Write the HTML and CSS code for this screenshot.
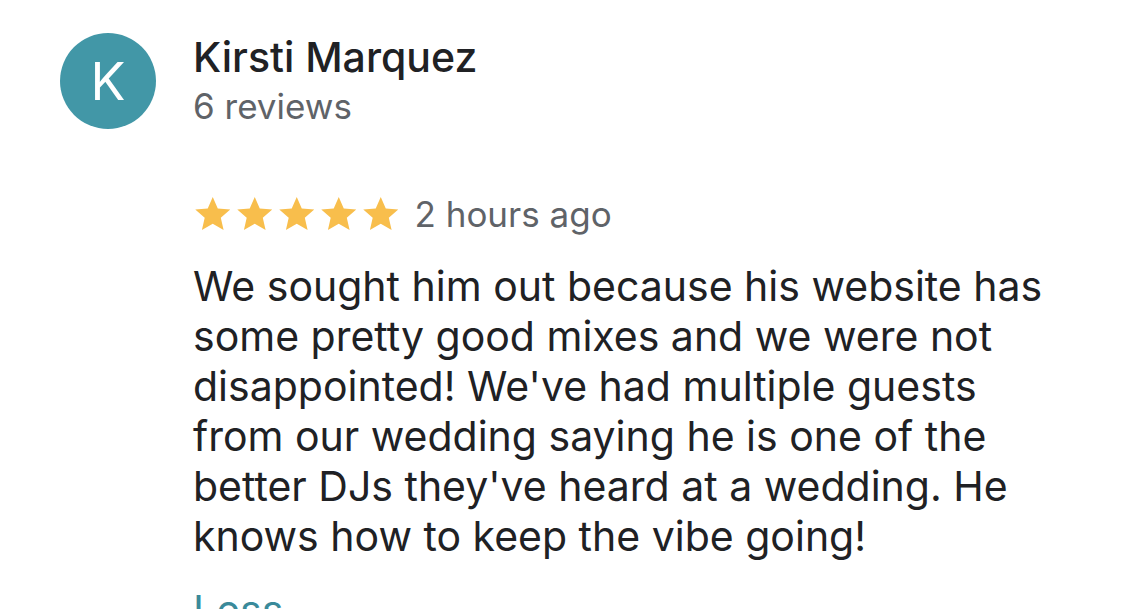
FILE: index.html
```html
<!DOCTYPE html>
<html>
<head>
<meta charset="utf-8">
<link rel="stylesheet" href="styles.css">
</head>
<body>
<div class="review">
  <div class="header">
    <div class="avatar">K</div>
    <div class="who">
      <div class="name">Kirsti Marquez</div>
      <div class="count">6 reviews</div>
    </div>
  </div>
  <div class="content">
    <div class="meta">
      <div class="stars">
        <svg class="star" viewBox="0 0 24 24"><path d="M12 1.8l3.05 6.98 7.58.68-5.74 5.02 1.7 7.42L12 18l-6.59 3.9 1.7-7.42L1.37 9.46l7.58-.68z"/></svg>
        <svg class="star" viewBox="0 0 24 24"><path d="M12 1.8l3.05 6.98 7.58.68-5.74 5.02 1.7 7.42L12 18l-6.59 3.9 1.7-7.42L1.37 9.46l7.58-.68z"/></svg>
        <svg class="star" viewBox="0 0 24 24"><path d="M12 1.8l3.05 6.98 7.58.68-5.74 5.02 1.7 7.42L12 18l-6.59 3.9 1.7-7.42L1.37 9.46l7.58-.68z"/></svg>
        <svg class="star" viewBox="0 0 24 24"><path d="M12 1.8l3.05 6.98 7.58.68-5.74 5.02 1.7 7.42L12 18l-6.59 3.9 1.7-7.42L1.37 9.46l7.58-.68z"/></svg>
        <svg class="star" viewBox="0 0 24 24"><path d="M12 1.8l3.05 6.98 7.58.68-5.74 5.02 1.7 7.42L12 18l-6.59 3.9 1.7-7.42L1.37 9.46l7.58-.68z"/></svg>
      </div>
      <span class="time">2 hours ago</span>
    </div>
    <p class="text">We sought him out because his website has some pretty good mixes and we were not disappointed! We've had multiple guests from our wedding saying he is one of the better DJs they've heard at a wedding. He knows how to keep the vibe going!</p>
    <div class="less">Less</div>
  </div>
</div>
</body>
</html>
```
FILE: styles.css
```css
html, body {
  margin: 0;
  padding: 0;
  background: #ffffff;
}
body {
  font-family: Inter, "Noto Sans", sans-serif;
  width: 1125px;
  height: 609px;
  overflow: hidden;
}
.review {
  padding: 33px 0 0 60px;
}
.header {
  display: flex;
  align-items: flex-start;
  gap: 37px;
  height: 96px;
}
.avatar {
  width: 96px;
  height: 96px;
  border-radius: 50%;
  background: #4297a7;
  color: #ffffff;
  font-size: 52px;
  font-weight: 400;
  display: flex;
  align-items: center;
  justify-content: center;
  flex-shrink: 0;
}
.name {
  font-size: 41px;
  line-height: 48px;
  color: #202124;
  font-weight: 500;
}
.count {
  font-size: 35px;
  line-height: 44px;
  color: #5f6368;
  margin-top: 3px;
}
.content {
  padding-left: 133px;
  margin-top: 63px;
}
.meta {
  display: flex;
  align-items: center;
  gap: 14px;
  height: 44px;
}
.stars {
  display: flex;
  gap: 2.5px;
}
.star {
  width: 39.5px;
  height: 39.5px;
  fill: #f8be4c;
}
.time {
  font-size: 35px;
  color: #5f6368;
  line-height: 44px;
}
.text {
  margin: 25px 0 0 0;
  font-size: 41px;
  line-height: 50px;
  color: #202124;
  width: 860px;
}
.less {
  margin-top: 24px;
  font-size: 41px;
  line-height: 50px;
  color: #3a8a9a;
}
```
